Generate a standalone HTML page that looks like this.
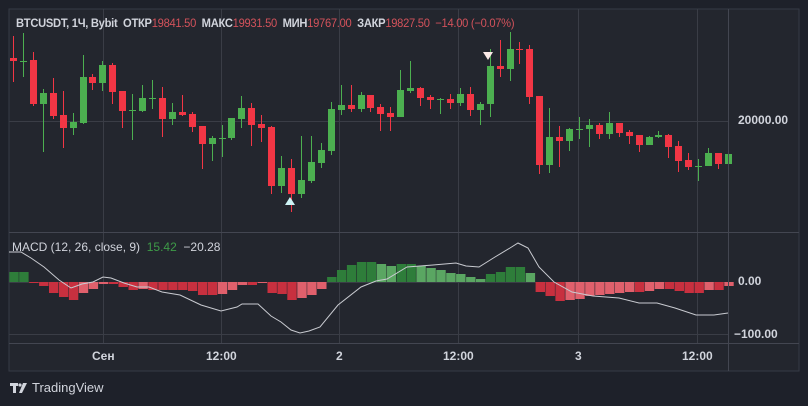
<!DOCTYPE html>
<html><head><meta charset="utf-8"><style>
html,body{margin:0;padding:0;background:#1e212a;width:808px;height:406px;overflow:hidden;font-family:"Liberation Sans","Noto Sans CJK SC",sans-serif}
#c{position:absolute;left:0;top:0}
.t{position:absolute;font-size:12px;color:#d1d4dc;white-space:nowrap}
.r{color:#d2525b}
</style></head><body>
<svg id="c" width="808" height="406" xmlns="http://www.w3.org/2000/svg">
<rect x="9" y="9" width="790" height="362" fill="#23262e" stroke="#363a45"/>
<g id="grid" stroke="#3a3d46" stroke-width="1"></g>
<g id="cd"></g>
<g id="h"></g>
<polyline id="ml" fill="none" stroke="#c9cbd1" stroke-width="1"/>
<line x1="9" y1="232.5" x2="799" y2="232.5" stroke="#434651"/>
<line x1="9" y1="343.5" x2="799" y2="343.5" stroke="#434651"/>
<line x1="728.5" y1="9" x2="728.5" y2="371" stroke="#434651"/>
<polygon points="290,197 285,205 295,205" fill="#cdf3f5"/>
<polygon points="483,52 493,52 488,60" fill="#fbe9e7"/>
<g fill="#d1d4dc">
<rect x="10" y="383" width="8" height="3"/><rect x="13" y="383" width="3" height="10"/>
<polygon points="19,393 23,383 27,383 22,393"/><circle cx="20" cy="385" r="1.6"/>
</g>
</svg>
<div class="t" style="left:16px;top:16px;font-size:12px;transform:scaleX(0.93);transform-origin:0 0;font-weight:bold;letter-spacing:-0.3px"><span>BTCUSDT, 1Ч, Bybit</span>&nbsp; ОТКР<span class="r" style="font-weight:normal">19841.50</span>&nbsp; МАКС<span class="r" style="font-weight:normal">19931.50</span>&nbsp; МИН<span class="r" style="font-weight:normal">19767.00</span>&nbsp; ЗАКР<span class="r" style="font-weight:normal">19827.50</span>&nbsp; <span class="r" style="font-weight:normal">−14.00 (−0.07%)</span></div>
<div class="t" style="left:738px;top:113px;font-weight:bold">20000.00</div>
<div class="t" style="left:12px;top:240px">MACD (12, 26, close, 9)&nbsp; <span style="color:#3e9b48">15.42</span>&nbsp; −20.28</div>
<div class="t" style="left:738px;top:274px;font-weight:bold">0.00</div>
<div class="t" style="left:734px;top:327px;font-weight:bold">−100.00</div>
<div class="t" style="left:92px;top:349px;font-weight:bold">Сен</div>
<div class="t" style="left:206px;top:349px;font-weight:bold">12:00</div>
<div class="t" style="left:336px;top:349px;font-weight:bold">2</div>
<div class="t" style="left:443px;top:349px;font-weight:bold">12:00</div>
<div class="t" style="left:575px;top:349px;font-weight:bold">3</div>
<div class="t" style="left:682px;top:349px;font-weight:bold">12:00</div>
<div class="t" style="left:32px;top:380px;font-size:13px">TradingView</div>
<script>
var NS="http://www.w3.org/2000/svg";
function el(p,n,a){var e=document.createElementNS(NS,n);for(var k in a)e.setAttribute(k,a[k]);p.appendChild(e);return e;}
var g=document.getElementById('grid');
[103,221,339,458,578,697].forEach(function(x){el(g,'line',{x1:x+.5,y1:9,x2:x+.5,y2:343});});
el(g,'line',{x1:9,y1:121.5,x2:728,y2:121.5});
el(g,'line',{x1:9,y1:282.5,x2:728,y2:282.5});
el(g,'line',{x1:9,y1:334.5,x2:728,y2:334.5});
var C=[['r',36,58,61,82],['g',33,61,61,77],['r',52,60,104,106],['g',89,93,104,152],['r',78,93,116,119],['r',91,115,128,148],['g',113,122,128,135],['g',55,77,123,124],['r',74,77,83,90],['g',61,65,83,91],['r',63,65,92,104],['r',91,91,111,128],['g',94,110,110,140],['g',85,98,111,112],['g',80,98,98,109],['r',87,98,119,137],['g',103,112,119,125],['r',95,112,115,116],['r',112,114,127,132],['r',126,126,144,169],['g',136,138,144,161],['g',125,138,138,157],['g',118,118,138,140],['g',96,108,119,128],['r',103,108,125,146],['r',115,124,128,142],['r',126,127,186,194],['g',156,168,186,193],['r',159,168,194,212],['g',136,180,194,198],['g',136,162,181,183],['g',143,150,163,168],['g',102,109,151,155],['g',85,105,110,115],['r',85,105,109,112],['g',92,95,109,112],['r',95,95,108,112],['r',104,107,114,131],['r',107,113,117,131],['g',70,90,117,117],['g',61,88,91,93],['r',87,88,98,106],['r',95,97,100,109],['g',98,99,99,114],['r',94,99,103,109],['g',88,94,103,106],['r',87,94,110,116],['g',102,104,110,125],['g',49,66,104,117],['r',40,66,69,77],['g',32,49,69,81],['r',42,49,49,64],['r',45,49,97,104],['r',96,96,165,174],['g',108,137,165,173],['r',126,137,141,167],['g',128,129,141,151],['g',117,129,129,139],['g',119,125,129,147],['r',123,125,134,139],['g',112,123,134,139],['r',123,123,133,137],['r',130,132,136,144],['r',135,135,145,152],['g',136,137,145,145],['g',131,135,137,138],['r',134,135,147,158],['r',141,146,161,172],['r',153,160,167,170],['g',159,166,166,181],['g',148,153,166,166],['r',153,153,164,169],['g',154,154,164,165]];
var cd=document.getElementById('cd');
C.forEach(function(c,i){var x=13+i*9.93;var col=c[0]=='r'?'#f23645':'#4caf50';var xs=Math.round(x);
el(cd,'rect',{x:xs,y:c[1],width:1,height:c[4]-c[1],fill:col});
var h=Math.max(1,c[3]-c[2]);el(cd,'rect',{x:xs-3,y:c[2],width:7,height:h,fill:col});});
var H=[10,10,-1,-4,-11,-15,-18,-11,-7,-2,-2,-5,-8,-7,-8,-8,-8,-8,-9,-13,-13,-12,-8,-3,-3,-1,-11,-12,-18,-16,-13,-7,5,12,17,20,20,18,16,18,18,16,14,12,9,8,5,3,8,10,15,15,9,-10,-14,-19,-18,-17,-14,-13,-12,-11,-10,-10,-9,-7,-7,-9,-11,-11,-8,-8,-4];
var hg=document.getElementById('h');
H.forEach(function(v,i){var x=9.3+i*9.93;var p=i>0?H[i-1]:0;var col;
if(v>=0)col=(v>=p)?'#2e7d3a':'#5aa662';else col=(v<=p)?'#c8303f':'#e0606c';
var y=v>=0?282-v:282;el(hg,'rect',{x:x.toFixed(1),y:y,width:9.4,height:Math.abs(v)||1,fill:col});});
var P=[[9,252],[21,252],[31,258],[44,267],[59,280],[71,288],[82,284],[93,282],[103,277],[111,278],[124,283],[137,287],[149,287],[162,292],[180,295],[201,305],[221,311],[237,307],[242,304],[258,304],[271,316],[281,322],[291,330],[300,333],[309,331],[320,327],[338,305],[361,287],[376,281],[387,279],[407,267],[433,265],[456,263],[466,266],[479,267],[495,257],[510,248],[518,243],[528,248],[539,267],[554,282],[572,292],[593,296],[619,298],[639,303],[657,303],[675,308],[696,315],[714,315],[728,313]];
document.getElementById('ml').setAttribute('points',P.map(function(p){return p.join(',')}).join(' '));
</script>
</body></html>
